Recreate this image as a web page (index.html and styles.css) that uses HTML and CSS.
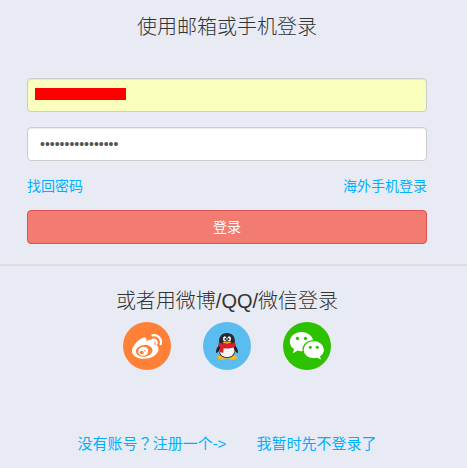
FILE: index.html
```
<!DOCTYPE html>
<html lang="zh-CN">
<head>
<meta charset="utf-8">
<meta name="viewport" content="width=device-width, initial-scale=1">
<title>登录</title>
<link rel="stylesheet" href="styles.css">
</head>
<body>
<main>
  <section class="panel account">
    <h1 class="title">使用邮箱或手机登录</h1>
    <form class="form">
      <div class="field">
        <input class="input filled" type="text" aria-label="邮箱或手机">
        <span class="mask"></span>
      </div>
      <input class="input" type="password" aria-label="密码" value="abcdefghabcdefgh">
      <div class="links">
        <a href="#">找回密码</a>
        <a href="#">海外手机登录</a>
      </div>
      <button class="submit" type="submit">登录</button>
    </form>
  </section>
  <section class="panel social">
    <h2 class="title">或者用微博/QQ/微信登录</h2>
    <div class="providers">
      <a href="#" aria-label="微博">
        <svg viewBox="0 0 48 48">
          <circle cx="24" cy="24" r="24" fill="#ff8037"/>
          <path fill="#fff" d="M20 15.700c2.500-.9 4 .3 3.300 3.200 3.500-1.600 7.500-1.800 8.300.4.400 1 .1 2-.3 3 2.700.7 4.400 2.500 4.200 5-.4 5.300-7 9.500-14.500 9.500C14 36.800 9 33.700 9 29c0-5 6.600-11.800 11-13.300z"/>
          <ellipse cx="21.200" cy="28.800" rx="8.400" ry="5.900" fill="#ff8037" transform="rotate(-7 21.200 28.800)"/>
          <ellipse cx="20.200" cy="29.300" rx="5.100" ry="4.500" fill="#fff" transform="rotate(-15 20.200 29.300)"/>
          <ellipse cx="18.700" cy="30.500" rx="2" ry="1.800" fill="#ff8037"/>
          <circle cx="21.800" cy="28.700" r=".7" fill="#ff8037"/>
          <path d="M29.500 13.300c5.700-1 9.700 3.600 8.200 9M29.700 17.700c2.900-.5 4.600 1.700 3.900 4.100" fill="none" stroke="#fff" stroke-width="2.200" stroke-linecap="round"/>
        </svg>
      </a>
      <a href="#" aria-label="QQ">
        <svg viewBox="0 0 48 48">
          <circle cx="24" cy="24" r="24" fill="#5bbcf0"/>
          <ellipse cx="19" cy="35.500" rx="4.600" ry="2.200" fill="#f6b81c"/>
          <ellipse cx="29.500" cy="35.500" rx="4.600" ry="2.200" fill="#f6b81c"/>
          <path fill="#202126" d="M17 22c-2.500 2.600-4.300 6-4 8.300.3 1.300 1.700.2 2.700-1.300C16.300 33 19 36 24 36s7.700-3 8.300-7c1 1.500 2.400 2.600 2.700 1.300.3-2.300-1.500-5.700-4-8.300z"/>
          <ellipse cx="24" cy="28.800" rx="7.600" ry="6.400" fill="#f5f5f5"/>
          <path fill="#292a30" d="M16.200 21.500C15.300 15 18.600 11 24 11s8.700 4 7.800 10.500c-1.500 3-14.100 3-15.600 0z"/>
          <ellipse cx="21.800" cy="16.800" rx="1.800" ry="2.600" fill="#fff"/>
          <ellipse cx="26.200" cy="16.800" rx="1.800" ry="2.600" fill="#fff"/>
          <ellipse cx="22.300" cy="17.200" rx=".7" ry="1.100" fill="#111"/>
          <ellipse cx="25.700" cy="17.200" rx=".7" ry="1.100" fill="#111"/>
          <path fill="#d51f2b" d="M15.900 20.300c4 2 12.200 2 16.200 0l.8 3.600c-3.500 2.400-8.500 3-12.300 2.300l-.3 4.600-3.800-.5.600-5-1.900-1.400z"/>
          <ellipse cx="24" cy="20.600" rx="4.200" ry="1.100" fill="#f0a52b"/>
        </svg>
      </a>
      <a href="#" aria-label="微信">
        <svg viewBox="0 0 48 48">
          <circle cx="24" cy="24" r="24" fill="#2dc100"/>
          <path fill="#fff" d="M18.500 10C12 10 6.800 14.300 6.800 19.700c0 3.100 1.700 5.700 4.300 7.400L9.900 31.300l4.800-2.700c1.200.4 2.500.6 3.800.6 6.500 0 11.700-4.300 11.700-9.500S25 10 18.500 10z"/>
          <path fill="#fff" stroke="#2dc100" stroke-width="1.200" d="M30.700 18.600c-6 0-10.700 4-10.700 9.100s4.700 9.100 10.700 9.100c1.200 0 2.400-.2 3.500-.5l4.900 2.400-1.400-4c2.300-1.700 3.800-4.200 3.800-7 0-5.100-4.800-9.100-10.800-9.100z"/>
          <g fill="#2dc100">
            <circle cx="14.500" cy="16.500" r="1.700"/>
            <circle cx="22.500" cy="16.500" r="1.700"/>
            <circle cx="27.300" cy="25.300" r="1.500"/>
            <circle cx="34.300" cy="25.300" r="1.500"/>
          </g>
        </svg>
      </a>
    </div>
    <nav class="more">
      <a href="#">没有账号<span class="mark" lang="zh-TW">？</span>注册一个-&gt;</a>
      <a href="#">我暂时先不登录了</a>
    </nav>
  </section>
</main>
</body>
</html>
```
FILE: styles.css
```
* { box-sizing: border-box; }

body {
  margin: 0;
  background: #e8ebf3;
  color: #333;
  font: 14px/20px "Liberation Sans", "Noto Sans CJK SC", sans-serif;
}

a { color: #00b0ff; text-decoration: none; }

.panel { padding: 0 40px 0 27px; }

.account {
  padding-top: 13px;
  padding-bottom: 20px;
  border-bottom: 2px solid #dddde0;
}

.title {
  margin: 0;
  font-size: 20px;
  font-weight: 300;
  line-height: 28px;
  text-align: center;
}

.form {
  display: flex;
  flex-direction: column;
  margin-top: 37px;
}

.field {
  position: relative;
  margin-bottom: 15px;
}

.input {
  display: block;
  width: 100%;
  height: 34px;
  padding: 6px 12px;
  border: 1px solid #ccc;
  border-radius: 4px;
  background: #fff;
  box-shadow: inset 0 1px 1px rgba(0, 0, 0, .075);
  color: #555;
  font: inherit;
}

.filled { background: #faffbd; }

.mask {
  position: absolute;
  left: 8px;
  top: 10px;
  width: 91px;
  height: 12px;
  background: #f00;
}

.links {
  display: flex;
  justify-content: space-between;
  margin: 15px 0 14px;
}

.submit {
  height: 34px;
  padding: 0;
  border: 1px solid #d9534f;
  border-radius: 4px;
  background: #f27c72;
  color: #fff;
  font: inherit;
}

.social { padding-top: 21px; }

.providers {
  display: flex;
  justify-content: center;
  gap: 32px;
  margin-top: 7px;
}

.providers svg {
  display: block;
  width: 48px;
  height: 48px;
}

.more {
  display: flex;
  justify-content: center;
  align-items: baseline;
  gap: 30px;
  margin-top: 63px;
  font-size: 15px;
}

.mark { font-family: "Noto Sans CJK TC", sans-serif; }
```
